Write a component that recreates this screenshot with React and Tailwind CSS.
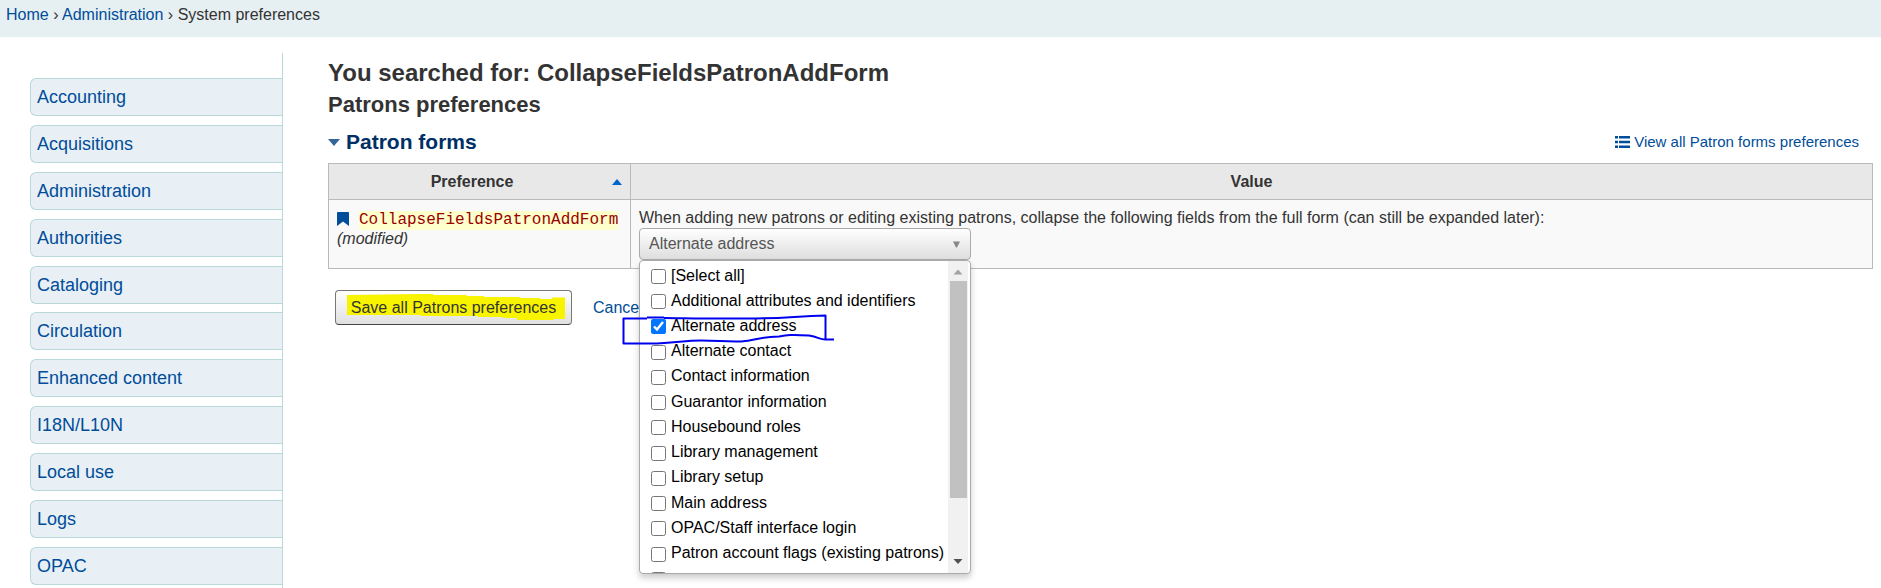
import React from "react";

const MODULES = [
  "Accounting",
  "Acquisitions",
  "Administration",
  "Authorities",
  "Cataloging",
  "Circulation",
  "Enhanced content",
  "I18N/L10N",
  "Local use",
  "Logs",
  "OPAC",
];

const OPTIONS = [
  "[Select all]",
  "Additional attributes and identifiers",
  "Alternate address",
  "Alternate contact",
  "Contact information",
  "Guarantor information",
  "Housebound roles",
  "Library management",
  "Library setup",
  "Main address",
  "OPAC/Staff interface login",
  "Patron account flags (existing patrons)",
];

function Breadcrumbs() {
  return (
    <nav aria-label="Breadcrumb" className="h-[37px] bg-[#e6eff2] px-[6px] pt-[3px] leading-6">
      <a href="#home" className="text-[#004d99]">Home</a>
      {" › "}
      <a href="#administration" className="text-[#004d99]">Administration</a>
      {" › "}
      <span>System preferences</span>
    </nav>
  );
}

function Sidebar() {
  return (
    <aside className="mt-4 w-[283px] shrink-0 border-r border-[#b9d8d9] pt-[25px] pl-[30px]">
      <ul className="flex h-[507px] flex-col justify-between">
        {MODULES.map((name) => (
          <li key={name}>
            <a
              href={"#" + name}
              className="block h-[38px] rounded-l-md border-y border-l border-[#b9d8d9] bg-[#e8f0f6] pl-[6px] text-lg leading-9 text-[#004d99]"
            >
              {name}
            </a>
          </li>
        ))}
      </ul>
    </aside>
  );
}

function FieldPicker() {
  return (
    <div className="relative w-[332px]">
      <button
        type="button"
        aria-haspopup="listbox"
        aria-expanded="true"
        className="flex h-8 w-full items-center justify-between rounded-[4px] border border-[#aaa] bg-linear-to-b from-white to-[#dedede] px-[9px] text-[#555]"
      >
        <span>Alternate address</span>
        <svg width="9" height="7" viewBox="0 0 9 7" aria-hidden="true">
          <path d="M1 0.500H8L5 6.500H4Z" fill="#888" />
        </svg>
      </button>
      <div className="absolute top-full left-0 z-10 flex h-[314px] w-full overflow-hidden rounded-[4px] border border-[#aaa] bg-white text-black shadow-[0_4px_6px_rgba(0,0,0,0.2)]">
        <ul className="mt-[2px] grid h-[328px] min-w-0 flex-1 auto-rows-fr pl-[11px]">
          {OPTIONS.map((name) => (
            <li key={name}>
              <label className="flex h-[25px] items-center gap-[5px] whitespace-nowrap">
                <input
                  type="checkbox"
                  defaultChecked={name === "Alternate address"}
                  className="mt-[2px] size-[15px] shrink-0"
                />
                {name}
              </label>
            </li>
          ))}
          <li className="flex h-[25px] items-center">
            <input
              type="checkbox"
              aria-label="Patron messaging preferences"
              className="mt-[2px] size-[15px] shrink-0"
            />
          </li>
        </ul>
        <div aria-hidden="true" className="mr-[2px] flex w-5 shrink-0 flex-col items-center bg-[#f1f1f1]">
          <svg width="20" height="20" viewBox="0 0 20 20">
            <path d="M5.500 13.500L10 8.500L14.500 13.500Z" fill="#a3a3a3" />
          </svg>
          <div className="h-[217px] w-[17px] bg-[#c1c1c1]" />
          <svg width="20" height="20" viewBox="0 0 20 20" className="mt-auto mb-[2px]">
            <path d="M5.500 8L10 13L14.500 8Z" fill="#505050" />
          </svg>
        </div>
      </div>
      <svg
        aria-hidden="true"
        width="230"
        height="40"
        viewBox="0 0 230 40"
        className="pointer-events-none absolute top-[82px] -left-5 z-20"
        fill="none"
        stroke="#0000ee"
        strokeWidth="2"
        strokeLinejoin="round"
      >
        <path d="M28 7.500H45M28 8.500H4.500V33.500H38C58 33 65 30.500 82 30.500C100 30.500 105 32 122 31.500C138 30 139 27 160 26.500C168 25 172 24.500 190 25.500C200 27 201 30 207 29.500H215M206.500 29.500V5.500C175 6 165 9 120 8.500C90 9 60 8 45 8" />
      </svg>
    </div>
  );
}

function PreferenceTable() {
  return (
    <table className="w-full border-collapse border border-[#b9bbbb]">
      <thead>
        <tr className="h-9 bg-[#e8e8e8]">
          <th className="w-[302px] border border-[#b9bbbb] px-2">
            <div className="flex items-center">
              <span className="flex-1 pr-[5px]">Preference</span>
              <svg width="10" height="6" viewBox="0 0 10 6" aria-hidden="true">
                <path d="M0 6L5 0L10 6Z" fill="#0066cc" />
              </svg>
            </div>
          </th>
          <th className="border border-[#b9bbbb]">Value</th>
        </tr>
      </thead>
      <tbody>
        <tr className="bg-[#f9f9f9] align-top">
          <td className="border border-[#b9bbbb] px-2 py-2">
            <div className="flex h-[21px] items-center gap-[10px]">
              <svg width="12" height="14" viewBox="0 0 12 14" aria-hidden="true">
                <path d="M0 1Q0 0 1 0H11Q12 0 12 1V14L6 9.500L0 14Z" fill="#004d99" />
              </svg>
              <code className="mt-[3px] bg-[#ffffcc] font-['Liberation_Mono','Courier_New',monospace] text-base leading-[19px] text-[#990000]">
                CollapseFieldsPatronAddForm
              </code>
            </div>
            <em className="block leading-5">(modified)</em>
          </td>
          <td className="border border-[#b9bbbb] p-2">
            <p className="leading-5">
              When adding new patrons or editing existing patrons, collapse the following fields from the full form (can still be expanded later):
            </p>
            <FieldPicker />
          </td>
        </tr>
      </tbody>
    </table>
  );
}

function Actions() {
  return (
    <div className="mt-[21px] ml-[7px] flex items-center gap-[21px]">
      <button
        type="submit"
        className="relative h-[35px] w-[237px] rounded-[4px] border border-[#777] border-b-[#444] bg-linear-to-b from-white to-[#e0e0e0] text-[#333]"
      >
        <svg
          aria-hidden="true"
          width="220"
          height="28"
          viewBox="0 0 220 28"
          className="absolute top-[2px] left-[10px]"
        >
          <path d="M1 2L74 1L87 1L88 2L120 2L121 3L138 3V4L174 4V5L194 5V6H206V4.500H219V26H208V27H171V25H157V24H132V23H75V22H1Z" fill="#f8f400" />
        </svg>
        <span className="relative">Save all Patrons preferences</span>
      </button>
      <a href="#cancel" className="text-[#004d99]">Cancel</a>
    </div>
  );
}

export default function App() {
  return (
    <div className="flex h-screen flex-col overflow-hidden bg-white font-['Liberation_Sans',Arial,sans-serif] text-base text-[#333]">
      <Breadcrumbs />
      <div className="flex min-h-0 flex-1">
        <Sidebar />
        <main className="min-w-0 flex-1 pt-5 pr-2 pl-[45px]">
          <h1 className="text-2xl leading-8 font-bold">You searched for: CollapseFieldsPatronAddForm</h1>
          <h2 className="text-[22px] leading-8 font-bold">Patrons preferences</h2>
          <div className="mt-[5px] mb-[5px] flex items-center justify-between pr-[14px]">
            <h3 className="flex items-center gap-[6px] text-[21px] leading-8 font-bold text-[#002f65]">
              <svg width="12" height="7" viewBox="0 0 12 7" aria-hidden="true">
                <path d="M0 0H12L6 7Z" fill="#336699" />
              </svg>
              Patron forms
            </h3>
            <a href="#patron-forms" className="flex items-center gap-1 text-[15px] leading-6 text-[#004d99]">
              <svg width="15" height="12" viewBox="0 0 15 12" fill="#004d99" aria-hidden="true">
                <path d="M0 0H3V2.500H0ZM4 0H15V2.500H4ZM0 4.700H3V7.200H0ZM4 4.700H15V7.200H4ZM0 9.500H3V12H0ZM4 9.500H15V12H4Z" />
              </svg>
              View all Patron forms preferences
            </a>
          </div>
          <PreferenceTable />
          <Actions />
        </main>
      </div>
    </div>
  );
}
